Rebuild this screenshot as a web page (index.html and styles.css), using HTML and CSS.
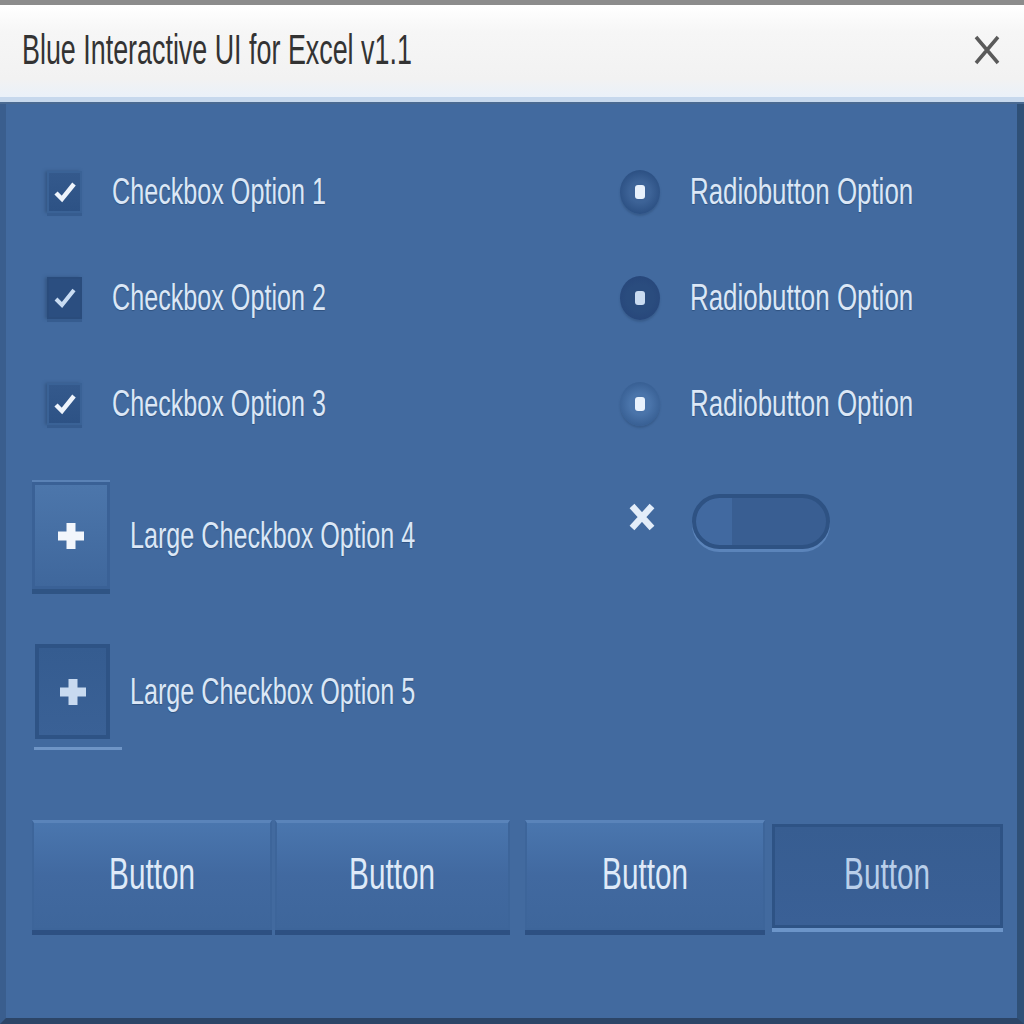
FILE: index.html
```html
<!DOCTYPE html>
<html>
<head>
<meta charset="utf-8">
<link rel="stylesheet" href="styles.css">
</head>
<body>
<div class="window">
  <header class="titlebar">
    <span class="title"><span class="cond">Blue Interactive UI for Excel v1.1</span></span>
    <svg class="close" width="30" height="32" viewBox="0 0 30 32"><path d="M4 3 L26 29 M26 3 L4 29" stroke="#5a5a5a" stroke-width="3.5" fill="none"/></svg>
  </header>
  <main class="panel">
    <div class="options">
      <div class="col col-left">
        <div class="row small">
          <span class="cb"><svg width="24" height="24" viewBox="0 0 24 24"><path d="M3 13 L9 19 L21 4" stroke="#eef4fc" stroke-width="4.5" fill="none"/></svg></span>
          <span class="lbl"><span class="cond">Checkbox Option 1</span></span>
        </div>
        <div class="row small">
          <span class="cb cb-dark"><svg width="24" height="24" viewBox="0 0 24 24"><path d="M3 13 L9 19 L21 4" stroke="#c9dcf2" stroke-width="4" fill="none"/></svg></span>
          <span class="lbl"><span class="cond">Checkbox Option 2</span></span>
        </div>
        <div class="row small">
          <span class="cb"><svg width="24" height="24" viewBox="0 0 24 24"><path d="M3 13 L9 19 L21 4" stroke="#eef4fc" stroke-width="4.5" fill="none"/></svg></span>
          <span class="lbl"><span class="cond">Checkbox Option 3</span></span>
        </div>
        <div class="row large large-4">
          <span class="lcb"><svg width="30" height="30" viewBox="0 0 30 30"><path d="M15 2 V28 M2 15 H28" stroke="#f2f6fc" stroke-width="9" fill="none"/></svg></span>
          <span class="lbl"><span class="cond">Large Checkbox Option 4</span></span>
        </div>
        <div class="row large large-5">
          <span class="lcb lcb-dark"><svg width="30" height="30" viewBox="0 0 30 30"><path d="M15 2 V28 M2 15 H28" stroke="#c8daf0" stroke-width="9" fill="none"/></svg></span>
          <span class="lbl"><span class="cond">Large Checkbox Option 5</span></span>
        </div>
      </div>
      <div class="col col-right">
        <div class="row small">
          <span class="radio"><span class="dot"></span></span>
          <span class="lbl"><span class="cond cond-r">Radiobutton Option</span></span>
        </div>
        <div class="row small">
          <span class="radio radio-dark"><span class="dot"></span></span>
          <span class="lbl"><span class="cond cond-r">Radiobutton Option</span></span>
        </div>
        <div class="row small">
          <span class="radio radio-light"><span class="dot"></span></span>
          <span class="lbl"><span class="cond cond-r">Radiobutton Option</span></span>
        </div>
        <div class="row toggle-row">
          <svg class="tx" width="28" height="30" viewBox="0 0 28 30"><path d="M4 4 L24 26 M24 4 L4 26" stroke="#e3edf9" stroke-width="6.5" fill="none"/></svg>
          <span class="track"><span class="knob"></span></span>
        </div>
      </div>
    </div>
    <div class="buttons">
      <button class="btn b1"><span class="cond-c">Button</span></button>
      <button class="btn b2"><span class="cond-c">Button</span></button>
      <button class="btn b3"><span class="cond-c">Button</span></button>
      <button class="btn b4 btn-pressed"><span class="cond-c">Button</span></button>
    </div>
  </main>
</div>
</body>
</html>
```

FILE: styles.css
```css
* { box-sizing: border-box; }
html, body { margin: 0; padding: 0; }
body {
  width: 1024px;
  height: 1024px;
  background: #426a9f;
  font-family: "Liberation Sans", Arial, sans-serif;
  overflow: hidden;
}
.window {
  width: 1024px;
  height: 1024px;
  display: flex;
  flex-direction: column;
  border-top: 5px solid #8c8c8c;
}
.titlebar {
  height: 97px;
  flex: none;
  display: flex;
  align-items: center;
  justify-content: space-between;
  padding: 0 22px 4px 22px;
  background: linear-gradient(#ffffff 0%, #f6f6f6 30%, #f2f2f2 80%, #eaf1f9 100%);
  border-bottom: 5px solid #c6d8ed;
  box-shadow: 0 2px 0 #4a6a92;
  position: relative;
  z-index: 1;
}
.title {
  font-size: 43px;
  color: #333333;
  width: 400px;
  height: 50px;
  display: flex;
  align-items: center;
  overflow: visible;
}
.cond {
  display: inline-block;
  white-space: nowrap;
  transform: scaleX(0.68);
  transform-origin: left center;
}
.cond-r { transform: scaleX(0.70); }
.title .cond { transform: scaleX(0.625); }
.close { margin-top: 2px; }

.panel {
  flex: 1;
  display: flex;
  flex-direction: column;
  background: #426a9f;
  border-left: 6px solid #3a5e8e;
  border-right: 7px solid #2f5077;
  border-bottom: 6px solid #2c4567;
  padding: 37px 0 88px 0;
}
.options {
  display: grid;
  grid-template-columns: 588px 1fr;
  padding-left: 26px;
}
.col { display: flex; flex-direction: column; }
.row {
  display: flex;
  align-items: center;
}
.small { height: 106px; }
.col-left .small { padding-left: 15px; }
.lbl {
  font-size: 37px;
  color: #dbe7f6;
  text-shadow: 0 1px 1px rgba(30, 60, 100, 0.5);
  white-space: nowrap;
}
.cb {
  width: 35px;
  height: 42px;
  flex: none;
  display: flex;
  align-items: center;
  justify-content: center;
  margin-right: 30px;
  background: linear-gradient(#34598c, #2d5285);
  border: 2px solid #3a6296;
  box-shadow: 0 3px 0 #365c8f, -2px 0 3px rgba(40, 70, 110, 0.5);
}
.cb-dark { background: #2b4e80; border-color: #2a4c7c; }

.large-4 { margin-top: 25px; height: 107px; }
.large-5 { margin-top: 55px; height: 95px; position: relative; }
.large-5::after {
  content: "";
  position: absolute;
  left: 2px;
  top: 103px;
  width: 88px;
  height: 3px;
  background: #6f95c6;
}
.lcb {
  width: 78px;
  height: 100%;
  flex: none;
  display: flex;
  align-items: center;
  justify-content: center;
  margin-right: 20px;
  background: linear-gradient(#4c76ab, #3f679c);
  border: 3px solid #3a6196;
  box-shadow: 0 5px 0 #2f5484, 0 -2px 0 #5a82b6;
}
.lcb-dark {
  margin-left: 3px;
  width: 75px;
  margin-right: 20px;
  background: linear-gradient(#355c90, #3a6196);
  border: 4px solid #2e5385;
  box-shadow: none;
}

.radio {
  width: 40px;
  height: 44px;
  flex: none;
  border-radius: 50%;
  margin-right: 30px;
  display: flex;
  align-items: center;
  justify-content: center;
  background: radial-gradient(circle, #3d6397 35%, #2b4f82 75%);
  box-shadow: 0 2px 2px rgba(40, 70, 110, 0.4);
}
.radio-dark { background: radial-gradient(circle, #2a4c7e 45%, #27467a 80%); }
.radio-light { background: radial-gradient(circle, #4a74aa 35%, #355c90 80%); }
.dot {
  width: 10px;
  height: 14px;
  border-radius: 3px;
  background: #e8f1fc;
}
.radio-dark .dot { background: #c9dbf1; }

.toggle-row {
  margin-top: 37px;
  height: 55px;
}
.tx { margin-left: 8px; margin-right: 36px; margin-top: -10px; }
.track {
  width: 138px;
  height: 55px;
  flex: none;
  border-radius: 28px;
  border: 4px solid #2e5283;
  background: #395e92;
  display: flex;
  align-items: stretch;
  box-shadow: 0 3px 0 #5b84ba;
  overflow: hidden;
}
.knob {
  width: 36px;
  background: #4169a0;
  border-radius: 24px 0 0 24px;
}

.buttons {
  margin-top: auto;
  display: flex;
  align-items: flex-start;
  padding-left: 26px;
}
.btn {
  height: 110px;
  font-family: "Liberation Sans", Arial, sans-serif;
  font-size: 45px;
  color: #dfeaf8;
  display: flex;
  align-items: center;
  justify-content: center;
  background: linear-gradient(#4a76ae, #4169a0 50%, #3e669b);
  border: 2px solid #3d659a;
  border-top: 3px solid #5a84ba;
  border-radius: 0;
  box-shadow: 0 5px 0 #2d5082;
  padding: 0 0 4px 0;
  cursor: pointer;
}
.cond-c {
  display: inline-block;
  white-space: nowrap;
  transform: scaleX(0.66);
  transform-origin: center center;
}
.b1 { width: 240px; }
.b2 { width: 235px; margin-left: 3px; }
.b3 { width: 240px; margin-left: 15px; }
.b4 { width: 231px; margin-left: 7px; }
.btn-pressed {
  margin-top: 4px;
  height: 104px;
  background: linear-gradient(#375d91, #3a6096);
  border: 3px solid #2e5385;
  box-shadow: 0 4px 0 #6c95c9;
  color: #b9cfea;
}
```
